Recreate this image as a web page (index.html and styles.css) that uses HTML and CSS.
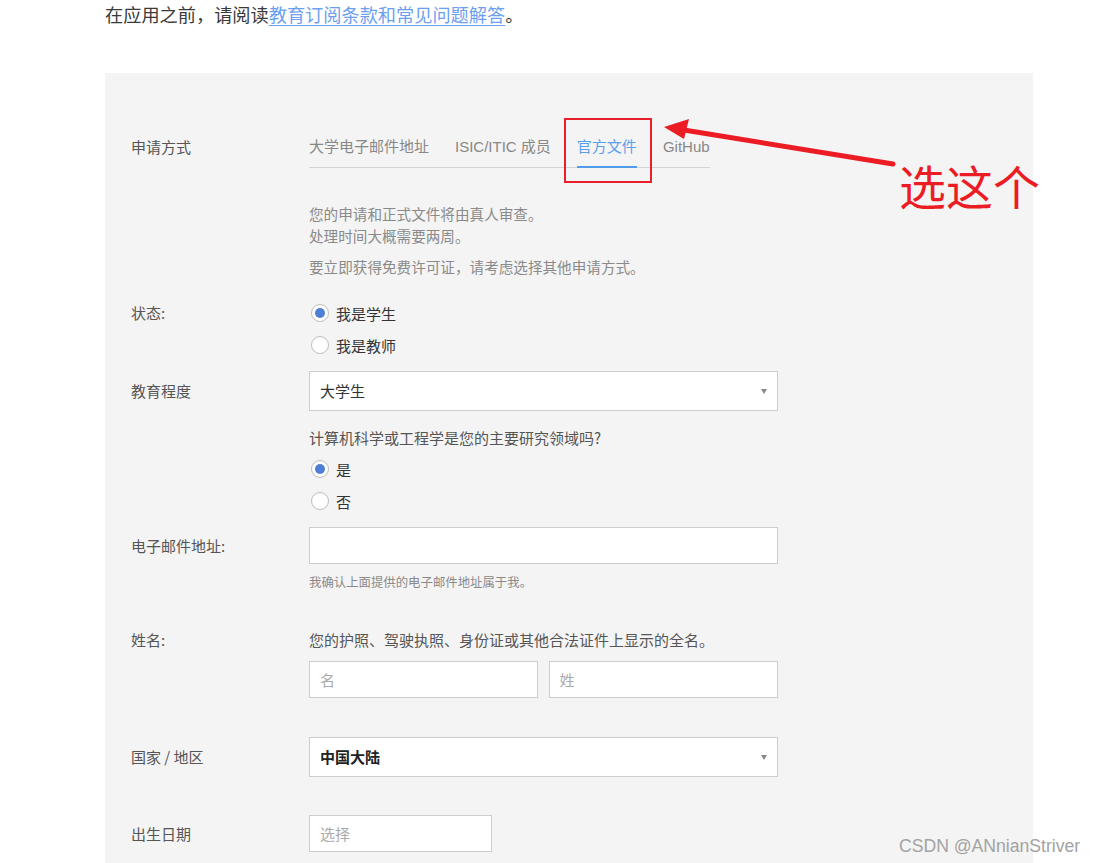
FILE: index.html
```html
<!DOCTYPE html>
<html lang="zh-CN">
<head>
<meta charset="utf-8">
<title>申请方式</title>
<link rel="stylesheet" href="styles.css">
</head>
<body>
<div class="page">
  <p class="intro">在应用之前，请阅读<a href="#" class="link">教育订阅条款和常见问题解答</a>。</p>

  <div class="panel">
    <div class="row">
      <div class="label lh20">申请方式</div>
      <div class="field">
        <div class="tabs">
          <span class="tab">大学电子邮件地址</span>
          <span class="tab">ISIC/ITIC 成员</span>
          <span class="tab active">官方文件</span>
          <span class="tab">GitHub</span>
        </div>
      </div>
    </div>

    <div class="row info-row">
      <div class="label"></div>
      <div class="field info">
        <p>您的申请和正式文件将由真人审查。<br>处理时间大概需要两周。</p>
        <p class="info-2">要立即获得免费许可证，请考虑选择其他申请方式。</p>
      </div>
    </div>

    <div class="row status-row">
      <div class="label lh32">状态:</div>
      <div class="field">
        <div class="radio"><span class="dot checked"></span>我是学生</div>
        <div class="radio"><span class="dot"></span>我是教师</div>
      </div>
    </div>

    <div class="row edu-row">
      <div class="label lh40">教育程度</div>
      <div class="field">
        <div class="select">大学生<span class="caret"></span></div>
      </div>
    </div>

    <div class="row q-row">
      <div class="label"></div>
      <div class="field">
        <div class="question">计算机科学或工程学是您的主要研究领域吗?</div>
        <div class="radio first"><span class="dot checked"></span>是</div>
        <div class="radio"><span class="dot"></span>否</div>
      </div>
    </div>

    <div class="row email-row">
      <div class="label lh37">电子邮件地址:</div>
      <div class="field">
        <div class="input wide"></div>
        <div class="hint">我确认上面提供的电子邮件地址属于我。</div>
      </div>
    </div>

    <div class="row name-row">
      <div class="label lh22">姓名:</div>
      <div class="field">
        <div class="question">您的护照、驾驶执照、身份证或其他合法证件上显示的全名。</div>
        <div class="name-inputs">
          <div class="input half placeholder">名</div>
          <div class="input half placeholder second">姓</div>
        </div>
      </div>
    </div>

    <div class="row country-row">
      <div class="label lh40">国家 / 地区</div>
      <div class="field">
        <div class="select bold">中国大陆<span class="caret"></span></div>
      </div>
    </div>

    <div class="row dob-row">
      <div class="label lh37">出生日期</div>
      <div class="field">
        <div class="input dob placeholder">选择</div>
      </div>
    </div>
  </div>
</div>

<svg class="annot" width="1097" height="863" viewBox="0 0 1097 863">
  <rect x="565" y="119" width="86" height="63" fill="none" stroke="#e8202a" stroke-width="2"/>
  <line x1="893" y1="164" x2="684" y2="130" stroke="#ec1c24" stroke-width="5" stroke-linecap="round"/>
  <polygon points="664,127 689,119 684,139" fill="#ec1c24"/>
</svg>
<div class="annot-text">选这个</div>
<div class="watermark">CSDN @ANnianStriver</div>
</body>
</html>
```

FILE: styles.css
```css
html, body {
  margin: 0;
  padding: 0;
  background: #ffffff;
}
body {
  font-family: "Noto Sans CJK SC", "Liberation Sans", sans-serif;
  color: #333;
  width: 1097px;
  height: 863px;
  overflow: hidden;
  position: relative;
}
.page {
  padding-left: 105px;
}
.intro {
  margin: 0;
  padding-top: 1px;
  font-size: 18.2px;
  line-height: 26px;
  color: #3a3a3a;
}
.link {
  color: #6d9ff0;
  text-decoration: underline;
  text-decoration-thickness: 1px;
  text-underline-offset: 3px;
}
.panel {
  margin-top: 46px;
  width: 928px;
  height: 820px;
  background: #f4f4f4;
  box-sizing: border-box;
  padding-top: 64px;
  padding-left: 26px;
}
.row {
  display: grid;
  grid-template-columns: 178px 469px;
}
.label {
  font-size: 15px;
  color: #555;
}
.lh20 { line-height: 20px; }
.lh22 { line-height: 22px; }
.lh32 { line-height: 32px; }
.lh37 { line-height: 37px; }
.lh40 { line-height: 40px; }

.tabs {
  display: flex;
  width: fit-content;
  gap: 26px;
  border-bottom: 1px solid #d4d4d4;
  height: 30px;
  align-items: flex-start;
}
.tab {
  display: block;
  height: 20px;
  font-size: 15px;
  line-height: 20px;
  color: #888;
  padding-bottom: 9px;
  border-bottom: 2px solid transparent;
  font-family: "Liberation Sans", "Noto Sans CJK SC", sans-serif;
}
.tab.active {
  color: #5a9fec;
  border-bottom-color: #4f9cec;
}

.info-row { margin-top: 35px; }
.info {
  font-size: 14.6px;
  line-height: 22px;
  color: #8a8a8a;
}
.info p { margin: 0; }
.info .info-2 { margin-top: 9px; }

.status-row { margin-top: 19px; }
.radio {
  display: flex;
  align-items: center;
  height: 32px;
  font-size: 15px;
  color: #333;
}
.dot {
  width: 16px;
  height: 16px;
  border: 1px solid #bdbdbd;
  border-radius: 50%;
  background: #fff;
  margin-left: 2px;
  margin-right: 7px;
  box-sizing: content-box;
  position: relative;
  flex: none;
}
.dot.checked::after {
  content: "";
  position: absolute;
  left: 3px;
  top: 3px;
  width: 10px;
  height: 10px;
  border-radius: 50%;
  background: #4f7fd4;
}

.edu-row { margin-top: 10px; }
.select {
  height: 40px;
  box-sizing: border-box;
  border: 1px solid #cccccc;
  background: #fff;
  padding-left: 10px;
  line-height: 38px;
  font-size: 15px;
  color: #333;
  display: flex;
  align-items: center;
  justify-content: space-between;
  padding-right: 10px;
}
.select.bold {
  font-weight: bold;
  color: #222;
}
.caret {
  width: 0;
  height: 0;
  border-left: 3.5px solid transparent;
  border-right: 3.5px solid transparent;
  border-top: 5px solid #888;
}

.q-row { margin-top: 16px; }
.question {
  font-size: 15px;
  line-height: 22px;
  color: #555;
}
.radio.first { margin-top: 4px; }

.email-row { margin-top: 10px; }
.input {
  height: 37px;
  box-sizing: border-box;
  border: 1px solid #cccccc;
  background: #fff;
  font-size: 15px;
  line-height: 35px;
  padding-left: 10px;
}
.placeholder { color: #aaa; }
.hint {
  margin-top: 9px;
  font-size: 12.4px;
  line-height: 18px;
  color: #8a8a8a;
}

.name-row { margin-top: 38px; }
.name-inputs {
  display: flex;
  gap: 11px;
  margin-top: 10px;
}
.input.half { width: 229px; }
.input.half.second { width: 230px; }

.country-row { margin-top: 39px; }
.dob-row { margin-top: 38px; }
.input.dob { width: 183px; }

.annot {
  position: absolute;
  left: 0;
  top: 0;
  pointer-events: none;
}
.annot-text {
  position: absolute;
  left: 899px;
  top: 152px;
  font-size: 47px;
  line-height: 66px;
  color: #ec1c24;
  font-family: "Noto Sans CJK SC", sans-serif;
}
.watermark {
  position: absolute;
  left: 899px;
  top: 836px;
  font-family: "Liberation Sans", sans-serif;
  font-size: 17.6px;
  line-height: 20px;
  color: #a3a3a3;
}
```
